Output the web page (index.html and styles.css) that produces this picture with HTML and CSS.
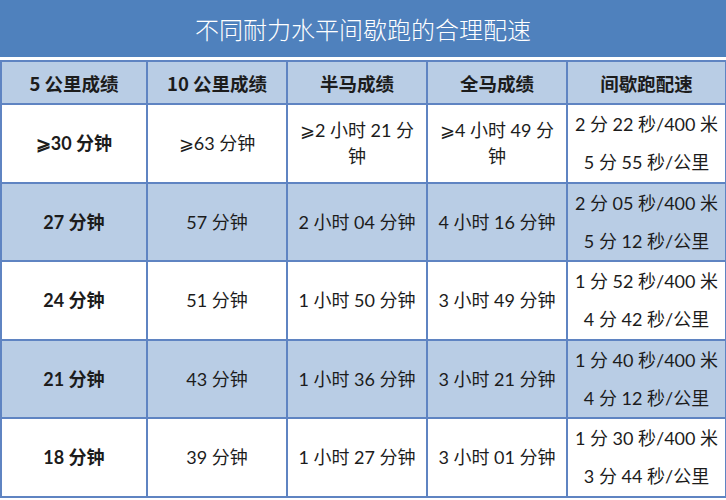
FILE: index.html
```html
<!DOCTYPE html>
<html lang="zh">
<head>
<meta charset="utf-8">
<link rel="stylesheet" href="styles.css">
</head>
<body>
<div class="page">
  <div class="title">不同耐力水平间歇跑的合理配速</div>
  <table class="pace">
    <colgroup>
      <col class="c1"><col class="c2"><col class="c3"><col class="c4"><col class="c5">
    </colgroup>
    <thead>
      <tr><th>5 公里成绩</th><th>10 公里成绩</th><th>半马成绩</th><th>全马成绩</th><th>间歇跑配速</th></tr>
    </thead>
    <tbody>
      <tr>
        <td class="first">⩾30 分钟</td>
        <td>⩾63 分钟</td>
        <td class="wrap">⩾2 小时 21 分钟</td>
        <td class="wrap">⩾4 小时 49 分钟</td>
        <td class="two"><div>2 分 22 秒/400 米</div><div>5 分 55 秒/公里</div></td>
      </tr>
      <tr class="alt">
        <td class="first">27 分钟</td>
        <td>57 分钟</td>
        <td>2 小时 04 分钟</td>
        <td>4 小时 16 分钟</td>
        <td class="two"><div>2 分 05 秒/400 米</div><div>5 分 12 秒/公里</div></td>
      </tr>
      <tr>
        <td class="first">24 分钟</td>
        <td>51 分钟</td>
        <td>1 小时 50 分钟</td>
        <td>3 小时 49 分钟</td>
        <td class="two"><div>1 分 52 秒/400 米</div><div>4 分 42 秒/公里</div></td>
      </tr>
      <tr class="alt">
        <td class="first">21 分钟</td>
        <td>43 分钟</td>
        <td>1 小时 36 分钟</td>
        <td>3 小时 21 分钟</td>
        <td class="two"><div>1 分 40 秒/400 米</div><div>4 分 12 秒/公里</div></td>
      </tr>
      <tr>
        <td class="first">18 分钟</td>
        <td>39 分钟</td>
        <td>1 小时 27 分钟</td>
        <td>3 小时 01 分钟</td>
        <td class="two"><div>1 分 30 秒/400 米</div><div>3 分 44 秒/公里</div></td>
      </tr>
    </tbody>
  </table>
</div>
</body>
</html>
```

FILE: styles.css
```css
html, body {
  margin: 0;
  padding: 0;
  background: #ffffff;
}
.page {
  width: 726px;
  font-family: "Lato", "Noto Sans CJK SC", sans-serif;
  color: #1c1c1c;
}
.title {
  height: 57px;
  background: #4f81bd;
  color: #ffffff;
  font-family: "Noto Sans CJK SC", sans-serif;
  font-weight: 300;
  font-size: 24px;
  line-height: 57px;
  text-align: center;
  margin-bottom: 3px;
}
.pace {
  border-collapse: collapse;
  table-layout: fixed;
  width: 725px;
}
.c1 { width: 146px; }
.c2 { width: 140px; }
.c3 { width: 140px; }
.c4 { width: 140px; }
.c5 { width: 159px; }
.pace th, .pace td {
  border: 2px solid #5f84c2;
  text-align: center;
  vertical-align: middle;
  padding: 0 6px;
  font-size: 18px;
}
.pace th {
  height: 41px;
  background: #b9cde5;
  font-weight: 700;
  font-family: "Noto Sans CJK SC", sans-serif;
  font-size: 18.5px;
}
.pace td {
  height: 76.5px;
  line-height: 26px;
  font-weight: 400;
}
.pace td.first {
  font-weight: 700;
}
.pace td.wrap {
  padding: 0 10px;
}
.pace td.two {
  line-height: 38px;
  padding: 0 2px;
}
.alt td {
  background: #b9cde5;
}
```
